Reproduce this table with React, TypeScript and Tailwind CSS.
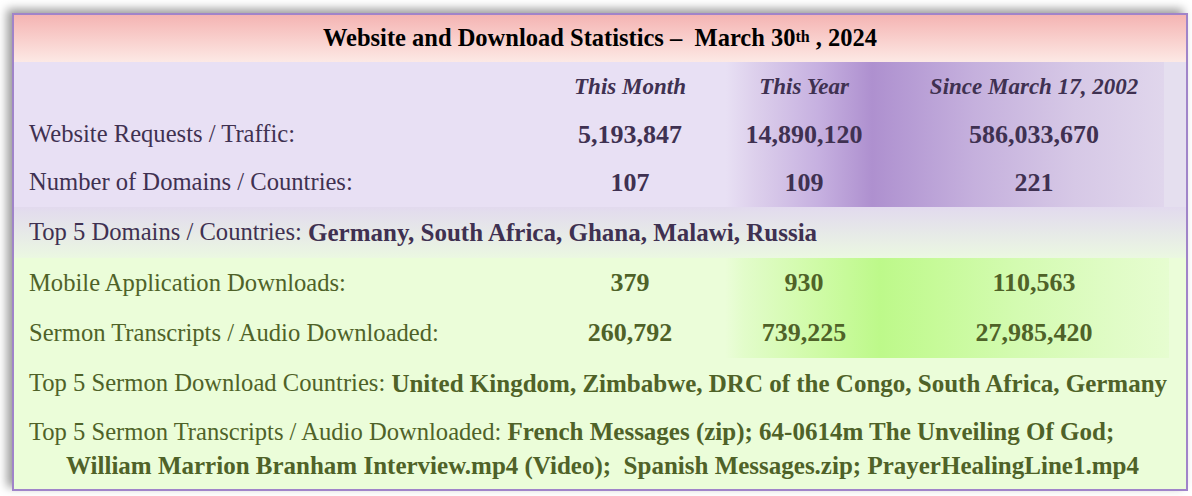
import React from 'react';

type Row = { label: string; values: [string, string, string] };

const webRows: Row[] = [
  { label: 'Website Requests / Traffic:', values: ['5,193,847', '14,890,120', '586,033,670'] },
  { label: 'Number of Domains / Countries:', values: ['107', '109', '221'] },
];

const appRows: Row[] = [
  { label: 'Mobile Application Downloads:', values: ['379', '930', '110,563'] },
  { label: 'Sermon Transcripts / Audio Downloaded:', values: ['260,792', '739,225', '27,985,420'] },
];

function StatRow({ row, h }: { row: Row; h: string }) {
  return (
    <div className={`grid grid-cols-[531px_170px_178px_282px] items-center ${h}`}>
      <div className="pl-[15px] text-[24.6px] whitespace-nowrap">{row.label}</div>
      {row.values.map((v, i) => (
        <div key={i} className="text-center text-[26px] font-bold">
          {v}
        </div>
      ))}
    </div>
  );
}

export default function App() {
  return (
    <div className="min-h-screen bg-white pt-[13px] pl-[12px]">
      <div className="w-[1176px] border-2 border-[#a084c9] shadow-[-5px_-4px_9px_rgba(0,0,0,0.4)] font-['Liberation_Serif','Times_New_Roman',serif] leading-none">
        {/* title */}
        <div className="h-[47px] flex items-center justify-center bg-gradient-to-b from-[#f4b4b3] to-[#fce9e5] text-black text-[24.5px] font-bold whitespace-nowrap">
          Website and Download Statistics –&nbsp; March 30<sup className="text-[16px] relative -top-[2px]">th</sup>&nbsp;, 2024
        </div>

        {/* website stats */}
        <div className="bg-[linear-gradient(90deg,#e8e0f4_0px,#e8e0f4_712px,#ddd0ec_740px,#c6b0e0_805px,#ae90cf_858px,#b79dd5_900px,#c5b0dd_960px,#d6c8e6_1060px,#e0d6ec_1150px,#e5dfef_1150px)] text-[#3f3151]">
          <div className="grid grid-cols-[531px_170px_178px_282px] items-center h-[49px] text-[23px] font-bold italic">
            <div />
            <div className="text-center">This Month</div>
            <div className="text-center">This Year</div>
            <div className="text-center">Since March 17, 2002</div>
          </div>
          <StatRow row={webRows[0]} h="h-[47px]" />
          <StatRow row={webRows[1]} h="h-[49px]" />
        </div>

        {/* top domains */}
        <div className="h-[51px] flex items-center pl-[15px] bg-gradient-to-b from-[#e2daee] to-[#ebf8e1] text-[#3f3151] text-[24.6px] whitespace-nowrap">
          Top 5 Domains / Countries:&nbsp;<span className="font-bold text-[25px]">Germany, South Africa, Ghana, Malawi, Russia</span>
        </div>

        {/* app stats */}
        <div className="bg-[#ebfdd9] text-[#4f6228]">
          <div className="bg-[linear-gradient(90deg,#ebfdd9_0px,#ebfdd9_711px,#e2fcca_730px,#d0fba8_800px,#bdf98a_866px,#c6fa98_920px,#d3fbb0_1000px,#e0fcc6_1100px,#e6fdd0_1155px,#ebfdd9_1155px)]">
            <StatRow row={appRows[0]} h="h-[50px]" />
            <StatRow row={appRows[1]} h="h-[50px]" />
          </div>

          <div className="h-[50px] flex items-center pl-[15px] text-[24.6px] whitespace-nowrap">
            Top 5 Sermon Download Countries:&nbsp;
            <span className="font-bold text-[25px]">United Kingdom, Zimbabwe, DRC of the Congo, South Africa, Germany</span>
          </div>

          <div className="pt-[7px] pb-[6px] text-[24.6px] leading-[34px] whitespace-nowrap">
            <div className="pl-[15px]">
              Top 5 Sermon Transcripts / Audio Downloaded:{' '}
              <span className="font-bold text-[25px]">French Messages (zip); 64-0614m The Unveiling Of God;</span>
            </div>
            <div className="pl-[52px] font-bold text-[25px]">
              William Marrion Branham Interview.mp4 (Video);&nbsp; Spanish Messages.zip; PrayerHealingLine1.mp4
            </div>
          </div>
        </div>
      </div>
    </div>
  );
}
